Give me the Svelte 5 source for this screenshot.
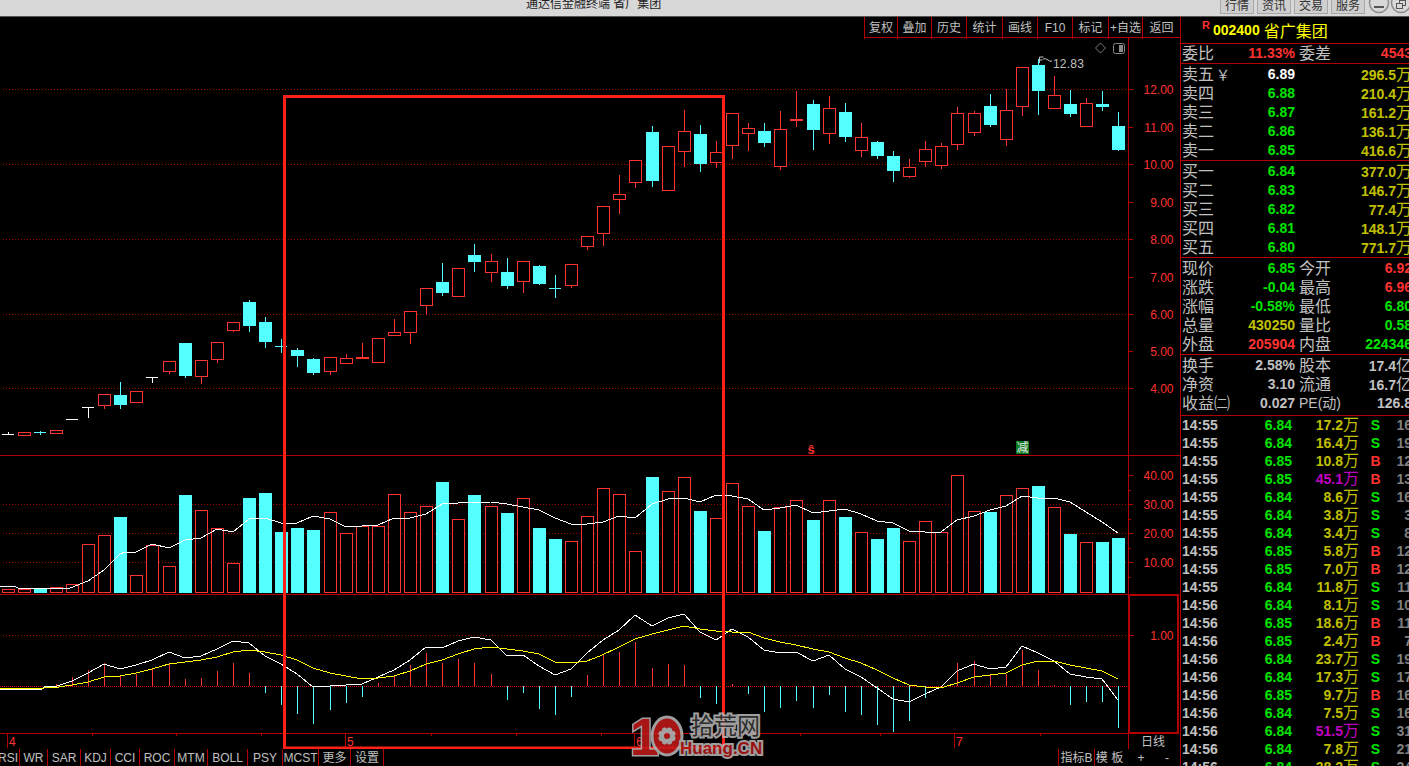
<script>
  const cx = (i) => 8 + 16 * i + Math.floor(i / 10);

  // high, top, bottom, low, kind
  const candles = [
    [432,434,434,434,"w"],[432,432,435,435,"r"],[431,432,432,434,"c"],[430,430,433,433,"r"],
    [419,419,419,419,"w"],[407,407,407,417,"w"],[394,394,405,408,"r"],[382,395,405,408,"c"],
    [391,391,402,402,"r"],[377,377,377,382,"w"],[361,361,371,373,"r"],[343,343,376,377,"c"],
    [360,360,376,383,"r"],[342,342,359,362,"r"],[322,322,330,331,"r"],[300,302,326,331,"c"],
    [317,322,342,347,"c"],[339,346,346,352,"c"],[348,350,356,366,"c"],[358,359,373,374,"c"],
    [357,357,371,374,"r"],[354,358,363,363,"r"],[343,357,358,358,"f"],[338,338,362,362,"r"],
    [319,332,335,335,"r"],[311,311,332,343,"r"],[288,288,305,314,"r"],[263,282,293,295,"c"],
    [268,268,296,296,"r"],[244,255,262,271,"c"],[254,261,272,281,"r"],[258,272,286,288,"c"],
    [261,261,281,292,"r"],[265,266,284,284,"c"],[275,288,288,297,"c"],[264,264,285,287,"r"],
    [236,236,246,249,"r"],[206,206,233,245,"r"],[175,194,199,213,"r"],[160,160,182,187,"r"],
    [126,132,181,186,"c"],[146,146,190,190,"r"],[110,131,151,166,"r"],[125,134,164,171,"c"],
    [141,152,162,167,"r"],[113,113,145,158,"r"],[123,128,133,150,"r"],[123,131,143,146,"c"],
    [111,129,166,169,"r"],[91,119,120,126,"f"],[100,104,130,149,"c"],[96,108,133,143,"r"],
    [103,112,137,141,"c"],[123,137,150,156,"r"],[141,142,156,158,"c"],[151,156,171,181,"c"],
    [159,167,176,177,"r"],[141,149,161,166,"r"],[143,146,165,168,"r"],[107,113,144,149,"r"],
    [111,113,132,135,"r"],[94,106,125,126,"c"],[89,110,139,145,"r"],[67,67,106,115,"r"],
    [59,65,91,114,"c"],[76,95,108,108,"r"],[90,104,114,116,"c"],[98,103,126,126,"r"],
    [91,104,107,110,"c"],[112,126,150,150,"c"],
  ];

  // top of each volume bar, kind
  const volumes = [
    [589,"r"],[589,"r"],[588,"c"],[587,"r"],[584,"r"],[544,"r"],[535,"r"],[517,"c"],[575,"r"],[545,"r"],
    [566,"r"],[495,"c"],[510,"r"],[528,"r"],[563,"r"],[498,"c"],[493,"c"],[532,"c"],[528,"c"],[530,"c"],
    [512,"r"],[533,"r"],[526,"r"],[526,"r"],[494,"r"],[512,"r"],[506,"r"],[482,"c"],[519,"r"],[495,"c"],
    [506,"r"],[513,"c"],[498,"r"],[528,"c"],[539,"c"],[541,"r"],[516,"r"],[488,"r"],[494,"r"],[551,"r"],
    [477,"c"],[491,"r"],[477,"r"],[511,"c"],[518,"r"],[483,"r"],[506,"r"],[531,"c"],[507,"r"],[500,"r"],
    [520,"c"],[500,"r"],[517,"c"],[532,"r"],[539,"c"],[528,"c"],[541,"r"],[521,"r"],[532,"r"],[475,"r"],
    [511,"r"],[512,"c"],[495,"r"],[488,"r"],[486,"c"],[507,"r"],[534,"c"],[542,"r"],[542,"c"],[538,"c"],
  ];

  const volMa = [
    [0,586],[16,587],[18,588],[70,588],[73,587],[80,584],[88,581],[104,570],[120,554],[125,552],[136,552],
    [152,544],[169,548],[185,540],[201,538],[217,529],[233,532],[249,519],[265,518],[281,523],[297,523],
    [313,516],[330,519],[346,527],[362,526],[378,525],[394,518],[410,518],[426,514],[442,504],[458,503],
    [491,502],[507,504],[523,507],[539,510],[555,518],[571,524],[587,524],[603,522],[619,516],[635,518],
    [652,504],[668,499],[684,498],[700,502],[716,495],[732,496],[748,499],[764,510],[780,508],[796,505],
    [813,513],[829,511],[845,509],[861,514],[877,521],[893,523],[909,531],[925,532],[941,532],[957,520],
    [974,516],[990,510],[1006,506],[1022,496],[1038,498],[1054,498],[1070,502],[1086,512],[1102,522],[1118,533],
  ];

  const macdWhite = [
    [0,689],[42,689],[44,687],[57,686],[72,681],[88,673],[104,664],[120,669],[136,665],[152,660],[169,652],
    [185,658],[201,656],[217,649],[233,641],[249,643],[265,656],[281,664],[297,674],[313,687],[330,686],
    [346,685],[362,684],[378,677],[394,670],[410,660],[426,647],[442,648],[458,641],[474,637],[491,640],
    [507,656],[523,655],[539,666],[555,675],[571,669],[587,653],[603,640],[619,630],[635,615],[652,626],
    [668,618],[684,614],[700,632],[716,640],[732,629],[748,637],[764,650],[780,653],[796,652],[813,661],
    [829,655],[845,669],[861,677],[877,688],[893,699],[909,702],[925,694],[941,687],[957,671],[974,664],
    [990,669],[1006,667],[1022,646],[1038,653],[1054,661],[1070,674],[1086,677],[1102,679],[1118,700],
  ];

  const macdYellow = [
    [0,688],[44,688],[59,687],[72,685],[88,682],[104,677],[120,676],[136,673],[152,669],[169,664],[185,662],
    [201,660],[217,657],[233,652],[249,650],[265,652],[281,655],[297,660],[313,668],[330,673],[346,676],
    [362,679],[378,678],[394,676],[410,671],[426,664],[442,660],[458,654],[474,649],[491,647],[507,649],
    [523,651],[539,654],[555,662],[571,663],[587,661],[600,656],[619,647],[635,639],[652,634],[668,630],
    [684,626],[700,629],[716,631],[732,632],[748,632],[764,638],[780,642],[796,645],[813,649],[829,652],
    [845,658],[861,663],[877,670],[893,678],[909,685],[925,687],[941,688],[957,683],[974,677],[990,675],
    [1006,673],[1022,665],[1038,661],[1054,661],[1070,665],[1086,668],[1102,671],[1118,679],
  ];

  // end of each macd bar, by candle index; zero line is 686
  const macdBars = [
    [3,684],[4,677],[5,670],[6,663],[7,675],[8,674],[9,669],[10,664],[11,679],[12,678],[13,671],[14,663],[15,673],
    [16,693],[17,705],[18,714],[19,724],[20,710],[21,703],[22,697],[23,683],[24,676],[25,665],[26,653],[27,663],
    [28,659],[29,663],[30,674],[31,700],[32,693],[33,709],[34,715],[35,697],[36,675],[37,654],[38,652],[39,642],
    [40,668],[41,664],[42,665],[43,698],[44,704],[45,684],[46,694],[47,712],[48,708],[49,701],[50,708],[51,695],
    [52,712],[53,715],[54,725],[55,732],[56,721],[57,698],[59,663],[60,661],[61,675],[62,674],[63,650],[64,670],
    [65,685],[66,705],[67,702],[68,702],[69,728],
  ];

  const priceAxis = [["12.00",89],["11.00",127],["10.00",164],["9.00",202],["8.00",239],["7.00",277],["6.00",314],["5.00",351],["4.00",388]];
  const priceGrid = [89, 164, 239, 314, 388];
  const volAxis = [["40.00",475],["30.00",504],["20.00",533],["10.00",562]];
  const pts = (list) => list.map((p) => p.join(",")).join(" ");

  const toolbar = ["复权","叠加","历史","统计","画线","F10","标记","+自选","返回"];
  const tabs = ["RSI","WR","SAR","KDJ","CCI","ROC","MTM","BOLL","PSY","MCST","更多","设置"];

  const sell = [["卖五","6.89","296.5"],["卖四","6.88","210.4"],["卖三","6.87","161.2"],["卖二","6.86","136.1"],["卖一","6.85","416.6"]];
  const buy = [["买一","6.84","377.0"],["买二","6.83","146.7"],["买三","6.82","77.4"],["买四","6.81","148.1"],["买五","6.80","771.7"]];
  const stats = [
    ["现价","6.85","green","今开","6.92","red"],
    ["涨跌","-0.04","green","最高","6.96","red"],
    ["涨幅","-0.58%","green","最低","6.80","green"],
    ["总量","430250","yellow","量比","0.58","green"],
    ["外盘","205904","red","内盘","224346","green"],
  ];
  const fund = [
    ["换手","2.58%","股本","17.4","亿"],
    ["净资","3.10","流通","16.7","亿"],
    ["收益㈡","0.027","PE(动)","126.8",""],
  ];
  const ticks = [
    ["14:55","6.84","17.2","S","16"],["14:55","6.84","16.4","S","19"],["14:55","6.85","10.8","B","12"],
    ["14:55","6.85","45.1","B","13"],["14:55","6.84","8.6","S","16"],["14:55","6.84","3.8","S","3"],
    ["14:55","6.84","3.4","S","8"],["14:55","6.85","5.8","B","12"],["14:55","6.85","7.0","B","12"],
    ["14:55","6.84","11.8","S","11"],["14:56","6.84","8.1","S","10"],["14:56","6.85","18.6","B","11"],
    ["14:56","6.85","2.4","B","7"],["14:56","6.84","23.7","S","19"],["14:56","6.84","17.3","S","17"],
    ["14:56","6.85","9.7","B","16"],["14:56","6.84","7.5","S","16"],["14:56","6.84","51.5","S","31"],
    ["14:56","6.84","7.8","S","21"],["14:56","6.84","38.2","S","24"],
  ];
</script>

<div class="window">
  <div class="titlebar">
    <span class="title-text">通达信金融终端 省广集团</span>
    <div class="title-btns">
      <button>行情</button><button>资讯</button><button>交易</button><button>服务</button>
    </div>
    <svg class="win-ctl" width="44" height="16" viewBox="0 0 44 16">
      <circle cx="14" cy="3" r="9.5" fill="#d8d8d8" stroke="#8c8c8c" stroke-width="1.5" />
      <rect x="9" y="6" width="10" height="2" fill="#555" />
      <circle cx="36" cy="3" r="9.5" fill="#d8d8d8" stroke="#8c8c8c" stroke-width="1.5" />
      <rect x="34.5" y="0.5" width="6" height="5" fill="none" stroke="#555" />
      <rect x="31.5" y="3.5" width="6" height="5" fill="#d8d8d8" stroke="#555" />
    </svg>
  </div>

  <div class="main">
    <div class="left">
      <div class="toolbar">
        {#each toolbar as t}<span>{t}</span>{/each}
      </div>

      <svg class="chart" width="1180" height="711" viewBox="0 38 1180 711">
        <!-- grids -->
        {#each priceGrid as y}
          <line class="dots" x1="3" x2="1128" y1={y + 0.5} y2={y + 0.5} />
        {/each}
        {#each [504, 533, 562] as y}
          <line class="dots" x1="3" x2="1128" y1={y + 0.5} y2={y + 0.5} />
        {/each}
        <line class="dots" x1="3" x2="1128" y1="635.5" y2="635.5" />
        <line class="zero" x1="0" x2="1128" y1="686.5" y2="686.5" />

        <!-- candles -->
        {#each candles as [hi, top, bot, lo, kind], i}
          {@const x = cx(i)}
          <line class={kind === "f" ? "r" : kind} x1={x + 0.5} x2={x + 0.5} y1={hi} y2={lo + 1} />
          {#if kind === "c" && bot > top}
            <rect class="solid" x={x - 6} y={top} width="13" height={bot - top} />
          {:else if kind === "r"}
            <rect class="hollow" x={x - 5.5} y={top + 0.5} width="12" height={bot - top} />
          {:else if kind === "f"}
            <rect fill="#ff3232" x={x - 6} y={top} width="13" height="2" />
          {:else}
            <line class={kind} x1={x - 6} x2={x + 6} y1={top + 0.5} y2={top + 0.5} />
          {/if}
        {/each}

        <!-- volume -->
        {#each volumes as [top, kind], i}
          {#if kind === "c"}
            <rect class="solid" x={cx(i) - 6} y={top} width="13" height={593 - top} />
          {:else}
            <rect class="hollow" x={cx(i) - 5.5} y={top + 0.5} width="12" height={592 - top} />
          {/if}
        {/each}
        <polyline class="w-line" points={pts(volMa)} />

        <!-- macd -->
        {#each macdBars as [i, end]}
          <line class={end < 686 ? "r" : "c"} x1={cx(i) + 0.5} x2={cx(i) + 0.5} y1="686" y2={end} />
        {/each}
        <polyline class="w-line" points={pts(macdWhite)} />
        <polyline class="y-line" points={pts(macdYellow)} />

        <!-- panel frames -->
        <line class="frame" x1="0" x2="1180" y1="455.5" y2="455.5" />
        <rect fill="#b40000" x="0" y="594" width="1128" height="1" />
        <rect fill="#b40000" x="0" y="733" width="1128" height="1" />
        <line class="frame" x1="1128.5" x2="1128.5" y1="38" y2="594" />
        <rect class="selected" x="1129" y="595" width="49" height="138" />
        <line class="frame" x1="1128.5" x2="1128.5" y1="733" y2="749" />

        <!-- price axis -->
        {#each priceAxis as [label, y]}
          <line class="frame" x1="1129" x2="1133" y1={y + 0.5} y2={y + 0.5} />
          <text class="axis" x="1173.5" y={y + 4.5} text-anchor="end">{label}</text>
        {/each}
        {#each volAxis as [label, y]}
          <line class="frame" x1="1129" x2="1133" y1={y + 0.5} y2={y + 0.5} />
          <line class="frame" x1="1129" x2="1131" y1={y + 15.5} y2={y + 15.5} />
          <text class="axis" x="1173.5" y={y + 4.5} text-anchor="end">{label}</text>
        {/each}
        <line class="frame" x1="1130" x2="1134" y1="635.5" y2="635.5" />
        <text class="axis" x="1173.5" y="640" text-anchor="end">1.00</text>

        <!-- date axis -->
        {#each [[7, 9, "4"], [345, 347, "5"], [634, 636, "6"], [954, 956, "7"]] as [x, tx, label]}
          <line class="frame" x1={x + 0.5} x2={x + 0.5} y1="734" y2="748" />
          <text class="axis" x={tx} y="746">{label}</text>
        {/each}
        {#each [92, 176, 261, 431, 516, 601, 720, 800, 880, 1040] as x}
          <line class="frame" x1={x + 0.5} x2={x + 0.5} y1="734" y2="736" />
        {/each}
        <text class="day" x="1141" y="746">日线</text>

        <!-- marks -->
        <path d="M1100.5 43 l5 5 l-5 5 l-5 -5 z" fill="none" stroke="#7a7a7a" />
        <rect x="1113.5" y="43.5" width="11" height="10" rx="2" fill="#000" stroke="#8a8a8a" />
        <rect x="1119" y="45" width="4" height="7" fill="#8a8a8a" />
        <path d="M1039.5 63 v-6 h4 M1039.5 60 h3 M1043 59 q3 -1 5 1 t4 1" fill="none" stroke="#c0c0c0" />
        <text class="hi" x="1053" y="68">12.83</text>
        <text class="sig-s" x="811" y="454" text-anchor="middle">ŝ</text>
        <rect x="1016" y="441" width="13" height="13" fill="#0a7a1e" />
        <text class="sig-j" x="1022.5" y="452" text-anchor="middle">减</text>

        <!-- hand drawn selection -->
        <rect class="select-box" x="284.5" y="96.5" width="439" height="651.5" />
      </svg>

      <div class="tabs">
        <div class="tab-list">
          {#each tabs as t}<span>{t}</span>{/each}
        </div>
        <div class="tab-right">
          <span class="tr-a">指标B</span><span class="tr-b">模 板</span>
          <span class="tr-c">+</span><span class="tr-d">-</span>
        </div>
      </div>

      <svg class="watermark" width="140" height="56" viewBox="630 708 140 56">
        <g opacity="0.88">
          <text class="wm-one" x="630" y="755">1</text>
          <ellipse cx="667" cy="736" rx="15" ry="19" fill="#c01818" stroke="#b4b4b4" stroke-width="3" />
          <circle cx="667" cy="736" r="9" fill="#b8b8b8" />
          <circle cx="667" cy="736" r="3" fill="#c01818" />
          {#each [0, 45, 90, 135, 180, 225, 270, 315] as a}
            <circle cx={667 + 9 * Math.cos((a * Math.PI) / 180)} cy={736 + 9 * Math.sin((a * Math.PI) / 180)} r="1.4" fill="#c01818" />
          {/each}
          <text class="wm-cn" x="691" y="734">拾荒网</text>
          <text class="wm-en" x="680" y="754">Huang.CN</text>
        </g>
      </svg>
    </div>

    <aside class="side">
      <div class="head">
        <span class="badge">R</span><span class="code">002400</span><span class="name">省广集团</span>
      </div>

      <div class="block row4">
        <span class="lb">委比</span><b class="red">11.33%</b><span class="lb lb2">委差</span><b class="red">4543</b>
      </div>

      <div class="block">
        {#each sell as [label, price, vol], i}
          <div class="row4">
            <span class="lb">{label}{#if i === 0}<i class="yen">￥</i>{/if}</span>
            <b class={i === 0 ? "white" : "green"}>{price}</b>
            <b class="yellow span2">{vol}<span class="wan">万</span></b>
          </div>
        {/each}
      </div>

      <div class="block">
        {#each buy as [label, price, vol]}
          <div class="row4">
            <span class="lb">{label}</span>
            <b class="green">{price}</b>
            <b class="yellow span2">{vol}<span class="wan">万</span></b>
          </div>
        {/each}
      </div>

      <div class="block">
        {#each stats as [a, av, ac, b, bv, bc]}
          <div class="row4">
            <span class="lb">{a}</span><b class={ac}>{av}</b>
            <span class="lb lb2">{b}</span><b class={bc}>{bv}</b>
          </div>
        {/each}
      </div>

      <div class="block fund">
        {#each fund as [a, av, b, bv, unit]}
          <div class="row4">
            <span class="lb">{a}</span><b class="gray">{av}</b>
            <span class="lb lb2" class:pe={b.startsWith("PE")}>{b}</span><b class="gray">{bv}{#if unit}<span class="wan">{unit}</span>{/if}</b>
          </div>
        {/each}
      </div>

      <div class="ticks">
        {#each ticks as [time, price, vol, side, count]}
          <div class="tick">
            <b class="gray">{time}</b>
            <b class="green">{price}</b>
            <b class={parseFloat(vol) > 40 ? "purple" : "yellow"}>{vol}<span class="wan">万</span></b>
            <b class={side === "B" ? "red mid" : "green mid"}>{side}</b>
            <b class="count">{count}</b>
          </div>
        {/each}
      </div>
    </aside>
  </div>
</div>

<style>
  :global(body) {
    background: #000;
    margin: 0;
    overflow: hidden;
    font-family: "Liberation Sans", "Noto Sans CJK SC", sans-serif;
  }
  .window {
    width: 1409px;
    height: 766px;
    overflow: hidden;
    background: #000;
  }
  .titlebar {
    height: 16px;
    display: flex;
    background: #d8d8d8;
    border-bottom: 1px solid #555;
    overflow: hidden;
  }
  .title-text {
    margin-left: 526px;
    font-size: 12px;
    line-height: 8px;
    color: #222;
  }
  .title-btns {
    margin-left: auto;
    display: flex;
    gap: 3px;
    height: 14px;
  }
  .title-btns button {
    width: 34px;
    padding: 0;
    border: 1px solid #a8a8a8;
    border-top: 0;
    background: #cfcfcf;
    color: #333;
    font-family: inherit;
    font-size: 12px;
    line-height: 9px;
  }
  .win-ctl {
    flex: none;
  }
  .main {
    display: flex;
    height: 749px;
  }
  .left {
    position: relative;
    width: 1180px;
    flex: none;
  }
  .toolbar {
    height: 20px;
    display: grid;
    grid-template-columns: 33px 34px 35px 36px 35px 35px 36px 34px 38px;
    border-bottom: 1px solid #b40000;
    margin-left: 864px;
  }
  .toolbar span {
    border-left: 1px solid #b40000;
    color: #c0c0c0;
    font-size: 12px;
    line-height: 22px;
    text-align: center;
    white-space: nowrap;
  }
  .chart {
    display: block;
  }
  .chart line,
  .chart polyline,
  .chart .hollow,
  .chart .solid {
    shape-rendering: crispEdges;
  }
  .dots {
    stroke: #a00000;
    stroke-dasharray: 1 2;
  }
  .zero {
    stroke: #e00000;
    stroke-dasharray: 1 1;
  }
  .frame {
    stroke: #b40000;
  }
  .selected {
    fill: none;
    stroke: #b40000;
    stroke-width: 2;
  }
  .r {
    stroke: #ff3232;
  }
  .c {
    stroke: #54ffff;
  }
  .w {
    stroke: #fff;
  }
  .solid {
    fill: #54ffff;
  }
  .hollow {
    fill: #000;
    stroke: #ff3232;
  }
  .w-line {
    fill: none;
    stroke: #fff;
  }
  .y-line {
    fill: none;
    stroke: #ffff00;
  }
  .select-box {
    fill: none;
    stroke: #ff2018;
    stroke-width: 3;
  }
  .axis {
    fill: #ff3232;
    font-size: 12px;
  }
  .day {
    fill: #c0c0c0;
    font-size: 12px;
  }
  .hi {
    fill: #c0c0c0;
    font-size: 12px;
    letter-spacing: 0.2px;
  }
  .sig-s {
    fill: #ff3232;
    font-size: 13px;
    font-weight: 700;
  }
  .sig-j {
    fill: #e8e8e8;
    font-size: 12px;
  }
  .tabs {
    height: 17px;
    display: flex;
    justify-content: space-between;
    overflow: hidden;
  }
  .tab-list {
    display: grid;
    grid-template-columns: 20px 28px 33px 30px 29px 35px 33px 40px 35px 36px 32px 33px;
  }
  .tab-list span {
    border-right: 1px solid #b40000;
    color: #c0c0c0;
    font-size: 12px;
    line-height: 18px;
    text-align: center;
    white-space: nowrap;
    overflow: hidden;
  }
  .tab-list span:first-child {
    direction: rtl;
    text-align: right;
    padding-right: 1px;
  }
  .tab-right {
    display: grid;
    grid-template-columns: 36px 34px 26px 26px;
    color: #c0c0c0;
    font-size: 12px;
    line-height: 18px;
  }
  .tab-right span {
    text-align: center;
    border-left: 1px solid #b40000;
    white-space: nowrap;
  }
  .tab-right .tr-b {
    padding-right: 4px;
  }
  .tab-right .tr-c,
  .tab-right .tr-d {
    border-left: 0;
  }
  .watermark {
    position: absolute;
    left: 630px;
    top: 691px;
  }
  .wm-one {
    fill: #c01818;
    stroke: #b4b4b4;
    stroke-width: 3px;
    paint-order: stroke;
    font-family: "Liberation Sans", sans-serif;
    font-size: 52px;
    font-weight: 700;
  }
  .wm-cn {
    fill: #333;
    stroke: #b4b4b4;
    stroke-width: 4px;
    paint-order: stroke;
    font-size: 23px;
  }
  .wm-en {
    fill: #b01414;
    stroke: #b4b4b4;
    stroke-width: 4px;
    paint-order: stroke;
    font-size: 17px;
    font-weight: 700;
  }
  .side {
    width: 229px;
    flex: none;
    box-sizing: border-box;
    border-left: 1px solid #b40000;
    overflow: hidden;
    color: #c0c0c0;
  }
  .head {
    height: 26px;
    border-bottom: 1px solid #b40000;
    display: flex;
    align-items: center;
    padding-left: 32px;
    width: 197px;
  }
  .badge {
    color: #ff3232;
    font-size: 11px;
    font-weight: 700;
    margin-top: -10px;
    margin-left: -11px;
    margin-right: 3px;
  }
  .code {
    color: #ffff00;
    font-size: 14px;
    font-weight: 700;
  }
  .name {
    color: #ffff00;
    font-size: 16px;
    margin-left: 4px;
  }
  .block {
    border-bottom: 1px solid #b40000;
    width: 229px;
    padding-top: 1px;
    padding-left: 1px;
    box-sizing: border-box;
  }
  .row4 {
    display: grid;
    grid-template-columns: 32px 81px 36px 81px;
    width: 230px;
    height: 19px;
    line-height: 19px;
    white-space: nowrap;
  }
  .block.row4 {
    height: 20px;
    padding-top: 0;
    box-sizing: border-box;
    width: 231px;
  }
  .fund {
    padding-bottom: 2px;
  }
  .row4 b,
  .tick b {
    font-size: 14px;
    text-align: right;
    font-weight: 700;
  }
  .span2 {
    grid-column: span 2;
  }
  .lb {
    font-size: 16px;
    color: #c0c0c0;
  }
  .lb2 {
    padding-left: 4px;
  }
  .pe {
    font-size: 14px;
  }
  .wan {
    font-size: 16px;
    font-weight: 400;
  }
  .yen {
    font-style: normal;
    margin-left: 2px;
    font-size: 14px;
  }
  b.red {
    color: #ff3232;
  }
  .green {
    color: #00e400;
  }
  .yellow {
    color: #c0c000;
  }
  .white {
    color: #fff;
  }
  .gray {
    color: #c0c0c0;
  }
  .purple {
    color: #c000c0;
  }
  .ticks {
    padding-left: 1px;
  }
  .tick {
    display: grid;
    grid-template-columns: 40px 70px 67px 33px 20px;
    width: 232px;
    height: 18px;
    line-height: 18px;
    white-space: nowrap;
  }
  .tick b:first-child {
    text-align: left;
  }
  .tick .mid {
    text-align: center;
  }
  .tick .count {
    color: #808080;
  }
</style>
